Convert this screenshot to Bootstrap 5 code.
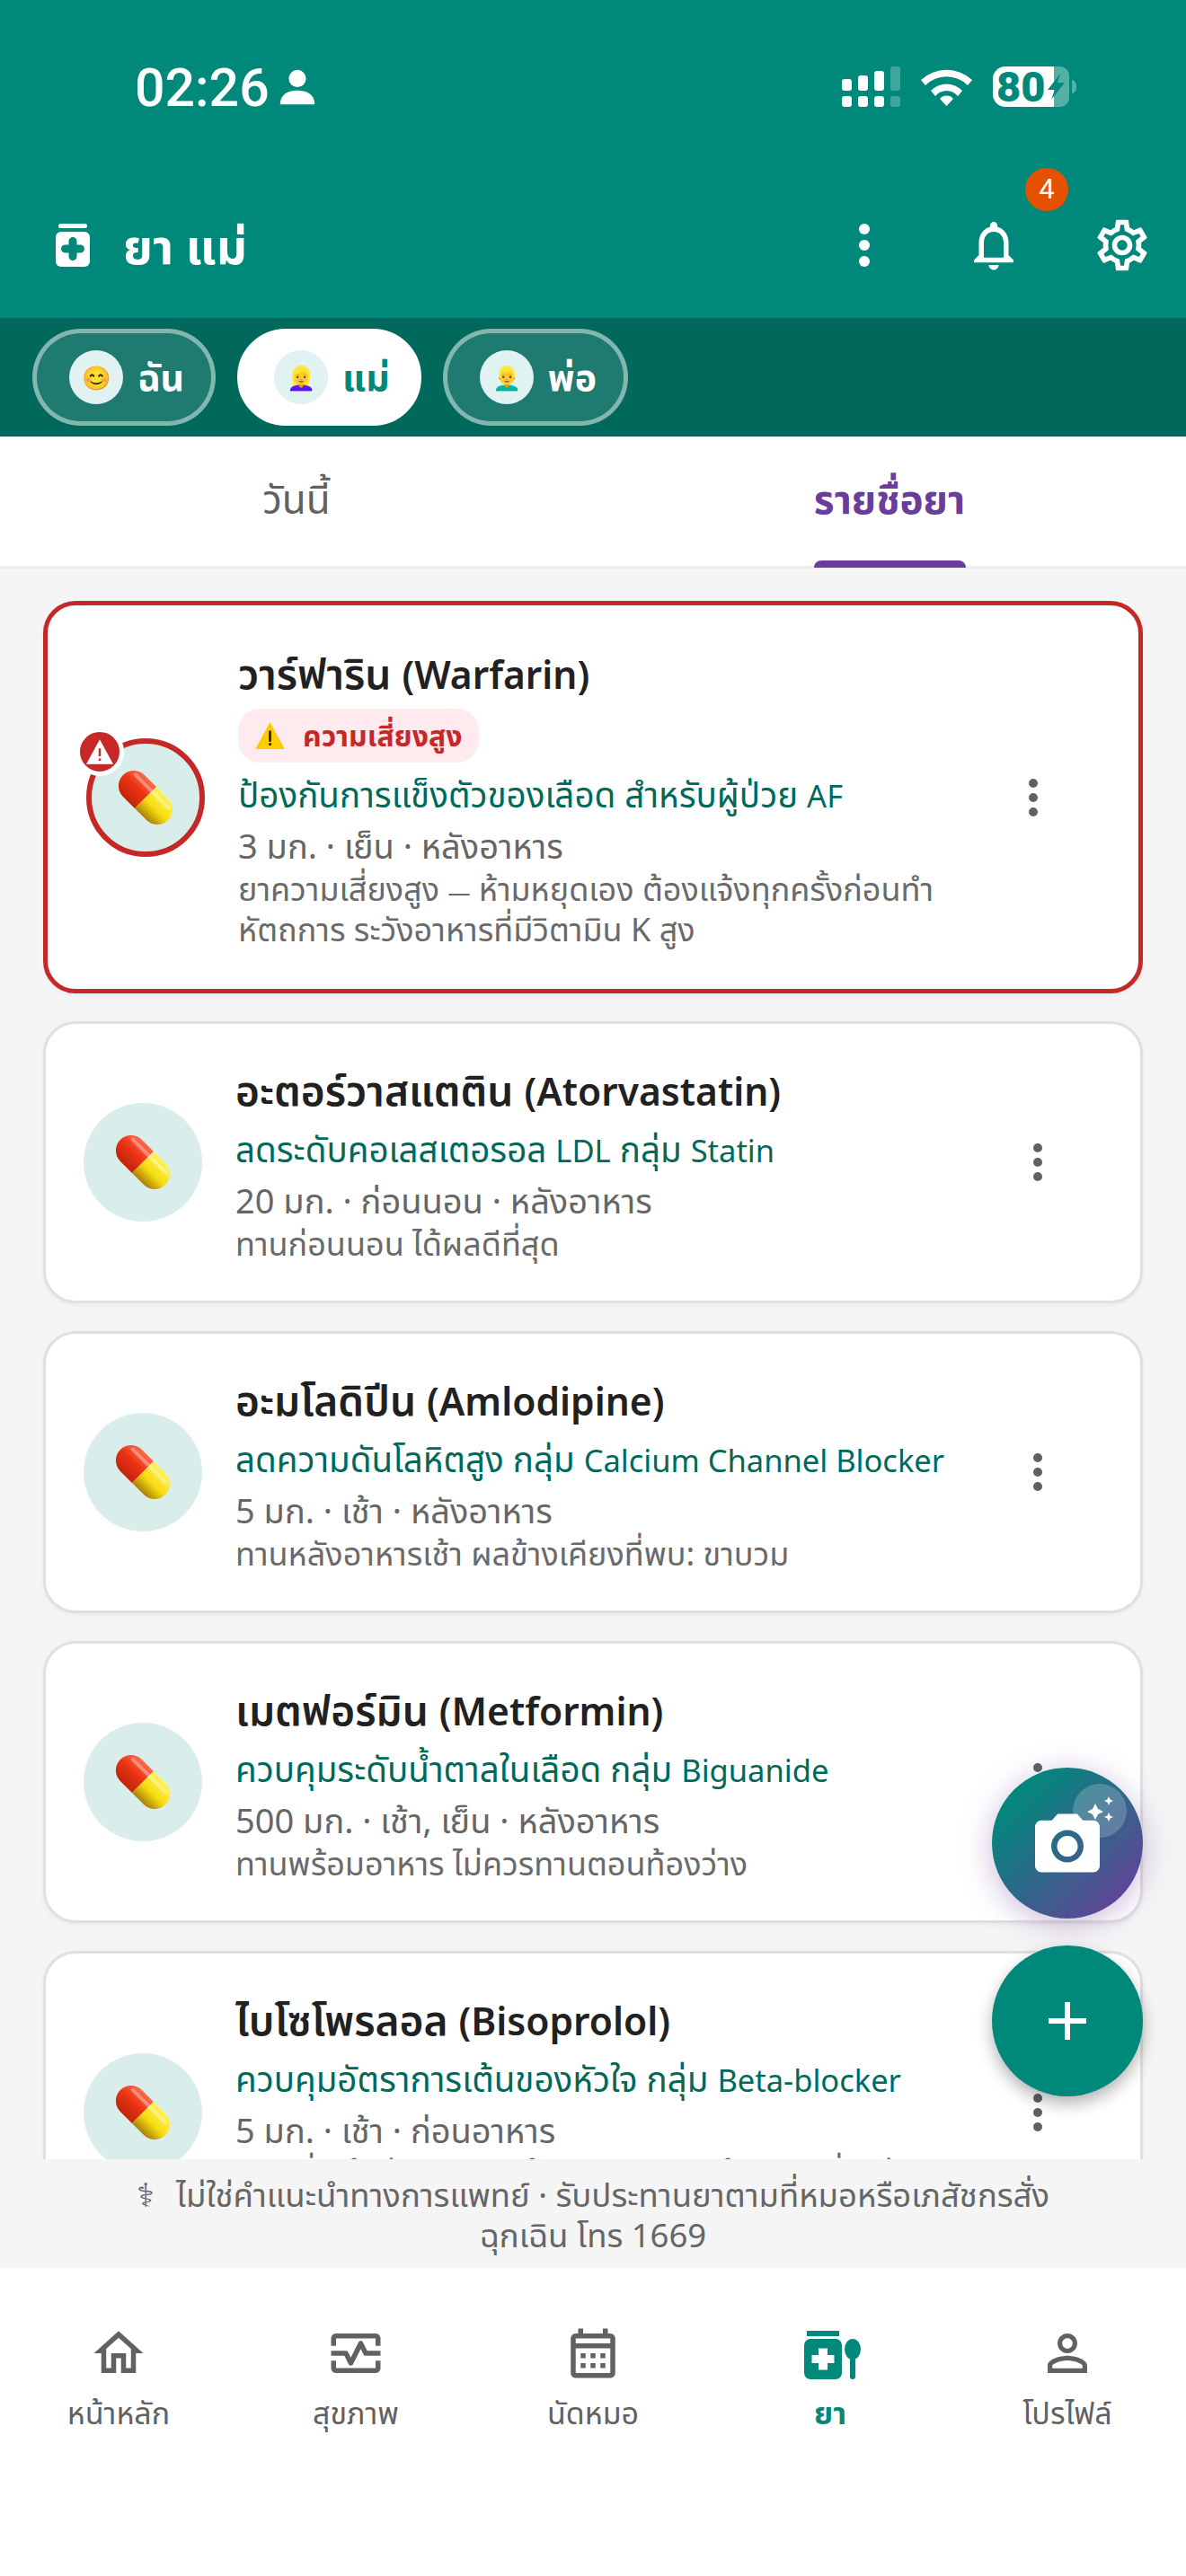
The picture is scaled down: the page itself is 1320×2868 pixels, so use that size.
<!doctype html>
<html lang="th"><head><meta charset="utf-8"><title>ยา แม่</title>
<link href="https://cdn.jsdelivr.net/npm/bootstrap@5.3.0/dist/css/bootstrap.min.css" rel="stylesheet">
<style>
body{margin:0;font-family:"Noto Sans","Noto Sans Thai",sans-serif;background:#f5f5f5;color:#212121}
.app-root{position:relative;width:1320px;height:2868px;overflow:hidden}
.app-head{height:354px;background:#00897b;color:#fff;flex:none}
.stat-row{height:192px;padding:73px 122px 0 150px}
.stat-time{font:500 59px/1 Roboto,sans-serif;height:48px;display:flex;align-items:center}
.head-row{height:162px;padding:0 37px 0 62px}
.head-title{font-size:53px;font-weight:700;line-height:1;margin-left:37px}
.bell-wrap{position:relative;width:66px;margin:0 76px 0 105px}
.bell-count{position:absolute;left:68px;top:-53px;width:48px;height:48px;border-radius:50%;background:#e65100;font:400 31px/48px Roboto,sans-serif;text-align:center;color:#fff}
.chip-bar{height:132px;background:#00695c;padding:12px 36px;gap:24px;flex:none}
.who-chip{height:108px;border-radius:54px;border:5px solid rgba(255,255,255,.45);background:rgba(255,255,255,.12);color:#fff;padding:0 30px 0 36px;font-size:41px;font-weight:700;gap:16px}
.who-chip.on{background:#fff;border-color:#fff;color:#00897b}
.who-face{width:60px;height:60px;border-radius:50%;background:#e0f2f1;font-size:26px;line-height:60px;text-align:center}
.tab-bar{height:147px;background:#fff;border-bottom:3px solid #eee;flex:none}
.tab-cell{height:144px;position:relative;font-size:44px;color:#616161;padding-top:36px;text-align:center;line-height:66px}
.tab-cell.on{color:#6a3d9a;font-weight:700}
.tab-mark{position:absolute;left:246px;bottom:-2px;width:169px;height:8px;background:#6a3d9a;border-radius:8px 8px 0 0}
.med-scroll{flex:1 1 0;min-height:0;overflow:hidden;padding:36px 48px 0;background:#f5f5f5}
.med-card{border:3px solid #e0e0e0;border-radius:36px;background:#fff;height:314px;margin-bottom:31px;padding:0 108px 0 42px;box-shadow:0 2px 5px rgba(0,0,0,.05);flex-direction:row;align-items:center}
.med-card.risk{border:5px solid #c62828;height:437px;padding-left:43px;padding-right:111px}
.med-card.clip{height:359px}
.pill-disc{width:132px;height:132px;flex:none;border-radius:50%;background:#d9eeea;position:relative;display:flex;align-items:center;justify-content:center;margin-right:37px}
.risk .pill-disc{border:6px solid #c62828}
.risk-dot{position:absolute;left:-18px;top:-18px;width:54px;height:54px;border-radius:50%;background:#c62828;border:5px solid #fff;display:flex;align-items:center;justify-content:center}
.med-body{flex:1;min-width:0}
.med-name{font-size:46px;font-weight:600;line-height:66px;color:#212121;margin-top:-2px;margin-bottom:2px}
.med-name .latin-run{font-size:42.500px;line-height:1}
.med-use{font-size:38.600px;line-height:62px;color:#00695c}
.med-use .latin-run{font-size:34.500px;line-height:1}
.med-dose{font-size:38px;line-height:52px;color:#666}
.med-note{font-size:36px;line-height:45px;color:#6a6a6a}
.dash-run{font-size:25px;line-height:1}
.risk .med-name{margin-top:-3px;margin-bottom:7px}
.risk .med-use{margin-top:4px}
.risk-tag{width:268px;height:60px;border-radius:24px;background:#ffebee;color:#c62828;font-size:32px;font-weight:700;gap:20px;padding-left:19px}
.dots-btn{width:12px;margin-left:40px;flex:none}
.fab-btn{position:absolute;left:1104px;width:168px;height:168px;border-radius:50%;display:flex;align-items:center;justify-content:center;border:0}
.fab-cam{top:1968px;background:linear-gradient(135deg,#00897b 15%,#6a3d9a 95%);box-shadow:0 6px 34px rgba(106,61,154,.35)}
.fab-add{top:2166px;background:#00897b;box-shadow:0 8px 18px rgba(0,0,0,.3)}
.spark-disc{position:absolute;left:90px;top:18px;width:60px;height:60px;border-radius:50%;background:rgba(255,255,255,.2)}
.spark-mark{position:absolute;left:106px;top:32px}
.warn-foot{height:121px;background:#f5f5f5;font-size:36.500px;line-height:45px;color:#666;text-align:center;padding-top:17px;flex:none}
.warn-sign{margin-right:24px}
.tab-foot{height:343px;background:#fff;flex:none;padding-top:62px}
.foot-item{width:264px;text-align:center;font-size:34px;line-height:42px;color:#616161}
.foot-item svg{display:block;margin:0 auto 12px}
.foot-item.on{color:#00897b;font-weight:700}
</style></head><body>
<svg width="0" height="0" style="position:absolute"><defs>
 <linearGradient id="redPart" x1="0" y1="0" x2="0" y2="1"><stop offset="0" stop-color="#ff6a50"/><stop offset=".45" stop-color="#ee3515"/><stop offset="1" stop-color="#c2230b"/></linearGradient>
 <linearGradient id="yelPart" x1="0" y1="0" x2="0" y2="1"><stop offset="0" stop-color="#fff25a"/><stop offset=".55" stop-color="#f7dc10"/><stop offset="1" stop-color="#a97f08"/></linearGradient>
 <clipPath id="pillLeft"><rect x="-6" y="0" width="36" height="60"/></clipPath>
 <clipPath id="pillRight"><rect x="30" y="0" width="36" height="60"/></clipPath>
 <symbol id="pillMark" viewBox="0 0 60 60"><g transform="rotate(45 30 30)">
  <rect x="-5.500" y="13" width="71" height="34" rx="17" fill="url(#redPart)" clip-path="url(#pillLeft)"/>
  <rect x="-5.500" y="13" width="71" height="34" rx="17" fill="url(#yelPart)" clip-path="url(#pillRight)"/>
  <rect x="2" y="18" width="56" height="4" rx="2" fill="#fff" opacity=".35"/></g></symbol>
</defs></svg>
<div class="app-root d-flex flex-column">
<header class="app-head">
 <div class="stat-row d-flex justify-content-between">
  <div class="stat-time">02:26<svg class="ms-2" width="46" height="46" viewBox="0 0 24 24" fill="#fff"><circle cx="12" cy="7" r="5"/><path d="M2 22c0-6 5-8 10-8s10 2 10 8z"/></svg></div>
  <svg width="261" height="48" viewBox="0 0 261 48">
   <g fill="#fff"><rect x="0" y="15" width="11" height="13" rx="3"/><rect x="0" y="34" width="11" height="12" rx="3"/><rect x="18" y="11" width="11" height="17" rx="3"/><rect x="18" y="34" width="11" height="12" rx="3"/><rect x="36" y="6" width="11" height="22" rx="3"/><rect x="36" y="34" width="11" height="12" rx="3"/></g>
   <g fill="#fff" opacity=".25"><rect x="54" y="1" width="11" height="27" rx="3"/><rect x="54" y="34" width="11" height="12" rx="3"/></g>
   <path d="M88 16a42 42 0 0 1 57 0l-5 6a33 33 0 0 0-47 0zM99 28a24 24 0 0 1 35 0l-5 6a16 16 0 0 0-25 0zM109 37a10 10 0 0 1 15 0l-7.500 8z" fill="#fff"/>
   <path d="M236 1h7a10 10 0 0 1 10 10v25a10 10 0 0 1-10 10h-7z" fill="#fff" opacity=".33"/><path d="M256 16a5 7 0 0 1 0 15z" fill="#fff" opacity=".33"/>
   <path d="M236 1v45h-54a14 14 0 0 1-14-14V15a14 14 0 0 1 14-14z" fill="#fff"/>
   <text x="172" y="40" font-family="Roboto,sans-serif" font-weight="900" font-size="47" fill="#00897b">80</text>
   <path d="M243 9 229 27h8l-4 11 15-19h-8z" fill="#00897b"/>
  </svg>
 </div>
 <div class="head-row d-flex align-items-center">
  <svg width="38" height="48" viewBox="0 0 38 48"><rect x="3" width="32" height="5" rx="2.500" fill="#fff"/><rect y="9" width="38" height="39" rx="6" fill="#fff"/><path d="M19 19.500v17M10.500 28h17" stroke="#00897b" stroke-width="9" stroke-linecap="round"/></svg>
  <div class="head-title">ยา แม่</div>
  <div class="flex-grow-1"></div>
  <svg width="12" height="48" viewBox="0 0 12 48" fill="#fff"><circle cx="6" cy="6" r="6"/><circle cx="6" cy="24" r="6"/><circle cx="6" cy="42" r="6"/></svg>
  <div class="bell-wrap"><div class="bell-count">4</div><svg width="66" height="66" viewBox="0 0 24 24" fill="#fff"><path d="M12 22c1.100 0 2-.9 2-2h-4c0 1.100.9 2 2 2zm6-6v-5c0-3.070-1.630-5.640-4.500-6.320V4c0-.83-.67-1.500-1.500-1.500s-1.500.67-1.500 1.500v.68C7.640 5.360 6 7.920 6 11v5l-2 2v1h16v-1l-2-2zm-2 1H8v-6c0-2.480 1.510-4.500 4-4.500s4 2.020 4 4.500v6z"/></svg></div>
  <svg width="68" height="68" viewBox="0 0 24 24" fill="#fff"><path d="M19.430 12.980c.04-.32.07-.64.07-.98 0-.34-.03-.66-.07-.98l2.110-1.650c.19-.15.24-.42.12-.64l-2-3.460c-.09-.16-.26-.25-.44-.25-.06 0-.12.01-.17.03l-2.490 1c-.52-.4-1.080-.73-1.690-.98l-.38-2.650C14.460 2.180 14.250 2 14 2h-4c-.25 0-.46.18-.49.42l-.38 2.650c-.61.25-1.170.59-1.690.98l-2.490-1c-.06-.02-.12-.03-.18-.03-.17 0-.34.09-.43.25l-2 3.460c-.13.22-.07.49.12.64l2.110 1.650c-.04.32-.07.65-.07.98 0 .33.03.66.07.98l-2.110 1.650c-.19.15-.24.42-.12.64l2 3.460c.09.16.26.25.44.25.06 0 .12-.01.17-.03l2.490-1c.52.4 1.080.73 1.690.98l.38 2.650c.03.24.24.42.49.42h4c.25 0 .46-.18.49-.42l.38-2.650c.61-.25 1.170-.59 1.690-.98l2.490 1c.06.02.12.03.18.03.17 0 .34-.09.43-.25l2-3.460c.12-.22.07-.49-.12-.64l-2.110-1.650zm-1.980-1.710c.04.31.05.52.05.73 0 .21-.02.43-.05.73l-.14 1.130.89.7 1.080.84-.7 1.210-1.270-.51-1.040-.42-.9.68c-.43.32-.84.56-1.250.73l-1.060.43-.16 1.130-.2 1.350h-1.400l-.19-1.350-.16-1.130-1.060-.43c-.43-.18-.83-.41-1.230-.71l-.91-.7-1.060.43-1.270.51-.7-1.210 1.080-.84.89-.7-.14-1.130c-.03-.31-.05-.54-.05-.74s.02-.43.05-.73l.14-1.130-.89-.7-1.080-.84.7-1.210 1.270.51 1.040.42.9-.68c.43-.32.84-.56 1.250-.73l1.060-.43.16-1.130.2-1.350h1.390l.19 1.350.16 1.130 1.060.43c.43.18.83.41 1.230.71l.91.7 1.060-.43 1.270-.51.7 1.210-1.070.85-.89.7.14 1.130zM12 8c-2.210 0-4 1.790-4 4s1.790 4 4 4 4-1.790 4-4-1.790-4-4-4zm0 6c-1.100 0-2-.9-2-2s.9-2 2-2 2 .9 2 2-.9 2-2 2z"/></svg>
 </div>
</header>
<div class="chip-bar d-flex">
 <div class="who-chip d-flex align-items-center"><span class="who-face">😊</span>ฉัน</div>
 <div class="who-chip on d-flex align-items-center"><span class="who-face">👱‍♀️</span>แม่</div>
 <div class="who-chip d-flex align-items-center"><span class="who-face">👱‍♂️</span>พ่อ</div>
</div>
<div class="tab-bar row g-0">
 <div class="col-6 tab-cell">วันนี้</div>
 <div class="col-6 tab-cell on">รายชื่อยา<span class="tab-mark"></span></div>
</div>
<main class="med-scroll">
 <div class="card med-card risk d-flex">
  <div class="pill-disc"><svg width="60" height="60"><use href="#pillMark"/></svg><span class="risk-dot"><svg width="30" height="28" viewBox="0 0 24 22" fill="#fff"><path d="M12 0 24 22H0zM11 8v7h2V8zm0 9v2h2v-2z" fill-rule="evenodd"/></svg></span></div>
  <div class="med-body">
   <div class="med-name">วาร์ฟาริน <span class="latin-run">(Warfarin)</span></div>
   <div class="risk-tag d-flex align-items-center"><svg width="33" height="30" viewBox="0 0 24 22"><path d="M12 0 24 22H0z" fill="#ffcc00"/><path d="M11 7h2v9h-2zm0 10h2v2h-2z" fill="#222"/></svg>ความเสี่ยงสูง</div>
   <div class="med-use">ป้องกันการแข็งตัวของเลือด สำหรับผู้ป่วย <span class="latin-run">AF</span></div>
   <div class="med-dose">3 มก. · เย็น · หลังอาหาร</div>
   <div class="med-note">ยาความเสี่ยงสูง <span class="dash-run">—</span> ห้ามหยุดเอง ต้องแจ้งทุกครั้งก่อนทำหัตถการ ระวังอาหารที่มีวิตามิน K สูง</div>
  </div>
  <svg class="dots-btn" width="12" height="42" viewBox="0 0 12 42" fill="#616161"><circle cx="6" cy="5" r="5"/><circle cx="6" cy="21" r="5"/><circle cx="6" cy="37" r="5"/></svg>
 </div>
 <div class="card med-card d-flex">
  <div class="pill-disc"><svg width="60" height="60"><use href="#pillMark"/></svg></div>
  <div class="med-body"><div class="med-name">อะตอร์วาสแตติน <span class="latin-run">(Atorvastatin)</span></div><div class="med-use">ลดระดับคอเลสเตอรอล <span class="latin-run">LDL</span> กลุ่ม <span class="latin-run">Statin</span></div><div class="med-dose">20 มก. · ก่อนนอน · หลังอาหาร</div><div class="med-note">ทานก่อนนอน ได้ผลดีที่สุด</div></div>
  <svg class="dots-btn" width="12" height="42" viewBox="0 0 12 42" fill="#616161"><circle cx="6" cy="5" r="5"/><circle cx="6" cy="21" r="5"/><circle cx="6" cy="37" r="5"/></svg>
 </div>
 <div class="card med-card d-flex">
  <div class="pill-disc"><svg width="60" height="60"><use href="#pillMark"/></svg></div>
  <div class="med-body"><div class="med-name">อะมโลดิปีน <span class="latin-run">(Amlodipine)</span></div><div class="med-use">ลดความดันโลหิตสูง กลุ่ม <span class="latin-run">Calcium Channel Blocker</span></div><div class="med-dose">5 มก. · เช้า · หลังอาหาร</div><div class="med-note">ทานหลังอาหารเช้า ผลข้างเคียงที่พบ: ขาบวม</div></div>
  <svg class="dots-btn" width="12" height="42" viewBox="0 0 12 42" fill="#616161"><circle cx="6" cy="5" r="5"/><circle cx="6" cy="21" r="5"/><circle cx="6" cy="37" r="5"/></svg>
 </div>
 <div class="card med-card d-flex">
  <div class="pill-disc"><svg width="60" height="60"><use href="#pillMark"/></svg></div>
  <div class="med-body"><div class="med-name">เมตฟอร์มิน <span class="latin-run">(Metformin)</span></div><div class="med-use">ควบคุมระดับน้ำตาลในเลือด กลุ่ม <span class="latin-run">Biguanide</span></div><div class="med-dose">500 มก. · เช้า, เย็น · หลังอาหาร</div><div class="med-note">ทานพร้อมอาหาร ไม่ควรทานตอนท้องว่าง</div></div>
  <svg class="dots-btn" width="12" height="42" viewBox="0 0 12 42" fill="#616161"><circle cx="6" cy="5" r="5"/><circle cx="6" cy="21" r="5"/><circle cx="6" cy="37" r="5"/></svg>
 </div>
 <div class="card med-card clip d-flex">
  <div class="pill-disc"><svg width="60" height="60"><use href="#pillMark"/></svg></div>
  <div class="med-body"><div class="med-name">ไบโซโพรลอล <span class="latin-run">(Bisoprolol)</span></div><div class="med-use">ควบคุมอัตราการเต้นของหัวใจ กลุ่ม <span class="latin-run">Beta-blocker</span></div><div class="med-dose">5 มก. · เช้า · ก่อนอาหาร</div><div class="med-note">ทานเมื่อเช้าก่อนอาหาร ห้ามหยุดยาเอง ถ้าชีพจรต่ำกว่าปกติ ให้ปรึกษาแพทย์</div></div>
  <svg class="dots-btn" width="12" height="42" viewBox="0 0 12 42" fill="#616161"><circle cx="6" cy="5" r="5"/><circle cx="6" cy="21" r="5"/><circle cx="6" cy="37" r="5"/></svg>
 </div>
</main>
<div class="warn-foot"><span class="warn-sign">⚕</span>ไม่ใช่คำแนะนำทางการแพทย์ · รับประทานยาตามที่หมอหรือเภสัชกรสั่ง<br>ฉุกเฉิน โทร 1669</div>
<nav class="tab-foot d-flex">
 <div class="foot-item"><svg width="66" height="66" viewBox="0 0 24 24" fill="#616161"><path d="M12 5.690l5 4.500V18h-2v-6H9v6H7v-7.810l5-4.500M12 3L2 12h3v8h6v-6h2v6h6v-8h3L12 3z"/></svg>หน้าหลัก</div>
 <div class="foot-item"><svg width="66" height="66" viewBox="0 0 24 24" fill="#616161"><path d="M20 4H4c-1.100 0-2 .9-2 2v3h2V6h16v3h2V6c0-1.100-.9-2-2-2zm0 14H4v-3H2v3c0 1.100.9 2 2 2h16c1.100 0 2-.9 2-2v-3h-2v3z"/><path d="M14.890 7.550c-.34-.68-1.450-.68-1.790 0L10 13.760l-1.110-2.210C8.720 11.210 8.380 11 8 11H2v2h5.380l1.720 3.450c.18.34.52.55.9.55s.72-.21.89-.55L14 10.240l1.110 2.210c.17.34.51.55.89.55h6v-2h-5.380l-1.730-3.450z"/></svg>สุขภาพ</div>
 <div class="foot-item"><svg width="66" height="66" viewBox="0 0 24 24" fill="#616161"><path d="M19 4h-1V2h-2v2H8V2H6v2H5c-1.100 0-2 .9-2 2v14c0 1.100.9 2 2 2h14c1.100 0 2-.9 2-2V6c0-1.100-.9-2-2-2zm0 16H5V10h14v10zm0-12H5V6h14v2zM9 14H7v-2h2zm4 0h-2v-2h2zm4 0h-2v-2h2zM9 18H7v-2h2zm4 0h-2v-2h2zm4 0h-2v-2h2z"/></svg>นัดหมอ</div>
 <div class="foot-item on"><svg width="70" height="66" viewBox="0 0 70 66" fill="#00897b"><rect x="9" y="8" width="36" height="6"/><path d="M13 17h28a7 7 0 0 1 7 7v31a7 7 0 0 1-7 7H13a7 7 0 0 1-7-7V24a7 7 0 0 1 7-7zM22 27.500v7.500h-7.500v9H22v7.500h10V44h7.500v-9H32v-7.500z" fill-rule="evenodd"/><ellipse cx="60" cy="28.500" rx="9" ry="11.500"/><rect x="57" y="36" width="6" height="26" rx="3"/></svg>ยา</div>
 <div class="foot-item"><svg width="66" height="66" viewBox="0 0 24 24" fill="#616161"><path d="M12 5.900c1.160 0 2.100.94 2.100 2.100s-.94 2.100-2.100 2.100S9.900 9.160 9.900 8s.94-2.100 2.100-2.100m0 9c2.970 0 6.100 1.460 6.100 2.100v1.100H5.900V17c0-.64 3.130-2.100 6.100-2.100M12 4C9.790 4 8 5.790 8 8s1.790 4 4 4 4-1.790 4-4-1.790-4-4-4zm0 9c-2.670 0-8 1.340-8 4v3h16v-3c0-2.660-5.330-4-8-4z"/></svg>โปรไฟล์</div>
</nav>
<button class="fab-btn fab-cam" aria-label="สแกนยา"><span class="spark-disc"></span>
 <svg width="72" height="66" viewBox="2 2 20 18" fill="#fff" class="position-relative"><path d="M9 2 7.170 4H4c-1.100 0-2 .9-2 2v12c0 1.100.9 2 2 2h16c1.100 0 2-.9 2-2V6c0-1.100-.9-2-2-2h-3.170L15 2H9zm3 15c-2.760 0-5-2.240-5-5s2.240-5 5-5 5 2.240 5 5-2.240 5-5 5z"/><circle cx="12" cy="12" r="3.200"/></svg>
 <svg class="spark-mark" width="30" height="30" viewBox="0 0 30 30" fill="#fff"><path d="M9 8l3 6 6 3-6 3-3 6-3-6-6-3 6-3zM24 0l1.500 3.500L29 5l-3.500 1.500L24 10l-1.500-3.500L19 5l3.500-1.500zM24 18l1.500 3.500L29 23l-3.500 1.500L24 28l-1.500-3.500L19 23l3.500-1.500z"/></svg>
</button>
<button class="fab-btn fab-add" aria-label="เพิ่มยา"><svg width="42" height="42" viewBox="0 0 42 42" fill="#fff"><path d="M18 0h6v18h18v6H24v18h-6V24H0v-6h18z"/></svg></button>
</div>
</body></html>
